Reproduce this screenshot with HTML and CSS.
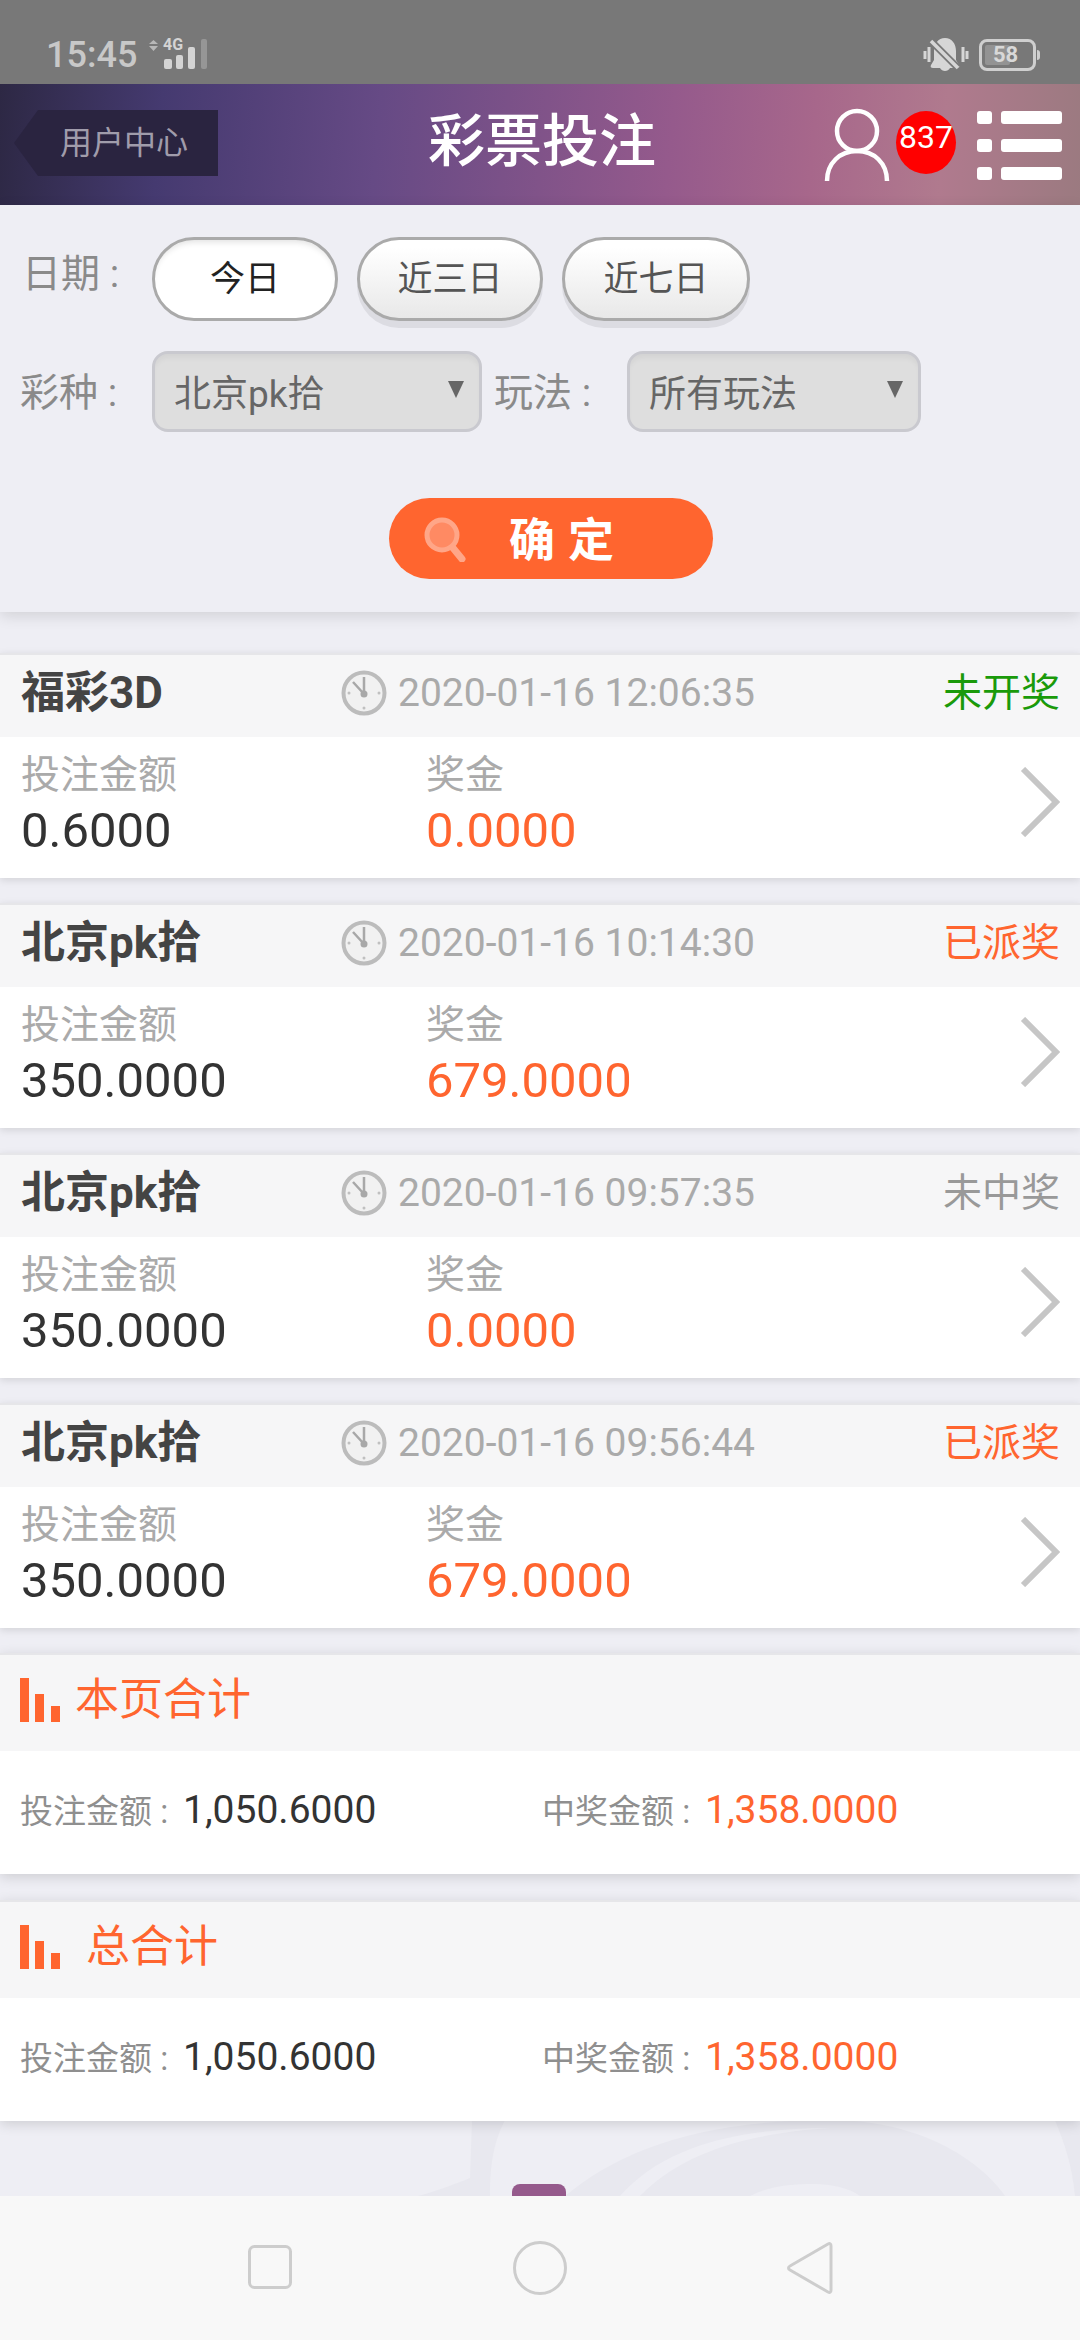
FILE: index.html
```html
<!DOCTYPE html>
<html lang="en">

<head>
    <meta charset="UTF-8">
    <meta name="viewport" content="width=device-width, initial-scale=1.0">
    <title>彩票投注</title>
    <link rel="stylesheet" href="styles.css">
</head>

<body>

<div class="statusbar">
    <div class="status-left">
        <span class="time">15:45</span>
        <span class="signal">
            <svg width="60" height="34" viewBox="0 0 60 34">
                <path d="M5.500 2l4.500 4H1zM5.500 13L1 8h9z" fill="#b8b8b8"/>
                <rect x="16" y="21" width="8" height="10" rx="2" fill="#d4d4d4"/>
                <rect x="28" y="17" width="7" height="14" rx="2" fill="#d4d4d4"/>
                <rect x="40" y="9" width="7" height="22" rx="2" fill="#d4d4d4"/>
                <rect x="53" y="1" width="6" height="30" rx="2" fill="#969696"/>
            </svg>
            <span class="net">4G</span>
        </span>
    </div>
    <div class="status-right">
        <svg width="47" height="34" viewBox="0 0 47 34">
            <path d="M23 0c7 0 11 6 11 13v9l3 5c1 2 0 3-2 3h-7c-1 2-3 3-5 3s-4-1-5-3h-7c-2 0-3-1-2-3l3-5v-9c0-7 4-13 11-13z" fill="#d6d6d6"/>
            <path d="M9 3l27 27" stroke="#787878" stroke-width="7"/>
            <path d="M9 3l27 27" stroke="#d6d6d6" stroke-width="3.500"/>
            <path d="M3 13v8M7 9v15M41 9v15M45 13v8" stroke="#d6d6d6" stroke-width="3"/>
        </svg>
        <div class="battery"><i class="battery-level"></i><span class="battery-text">58</span></div>
    </div>
</div>

<header>
    <a class="back">用户中心</a>
    <h1>彩票投注</h1>
    <div class="user">
        <svg width="66" height="74" viewBox="0 0 66 74">
            <circle cx="33" cy="23" r="20" fill="none" stroke="#fff" stroke-width="4.500"/>
            <path d="M3 73c0-18 13-30 30-30s30 12 30 30" fill="none" stroke="#fff" stroke-width="4.500"/>
        </svg>
        <span class="badge">837</span>
    </div>
    <div class="menu">
        <div class="menu-row"><i></i><b></b></div>
        <div class="menu-row"><i></i><b></b></div>
        <div class="menu-row"><i></i><b></b></div>
    </div>
</header>

<section class="filter">
    <div class="filter-row">
        <label class="date-label">日期 :</label>
        <button class="pill active">今日</button>
        <button class="pill">近三日</button>
        <button class="pill pill-last">近七日</button>
    </div>
    <div class="filter-row select-row">
        <label class="kind-label">彩种 :</label>
        <div class="select select-kind"><span>北京pk拾</span><i class="arrow"></i></div>
        <label class="play-label">玩法 :</label>
        <div class="select select-play"><span>所有玩法</span><i class="arrow"></i></div>
    </div>
    <button class="confirm">
        <svg width="46" height="46" viewBox="0 0 46 46">
            <circle cx="20" cy="19" r="15" fill="#ff8a63" stroke="#ffa688" stroke-width="5"/>
            <path d="M31 32l9 11" stroke="#ffa688" stroke-width="7" stroke-linecap="round"/>
        </svg>
        <span>确定</span>
    </button>
</section>

<main>
    <svg class="watermark" width="1080" height="76" viewBox="0 0 1080 76">
        <path d="M472 0h33c-10 20-15 40-15 76h-72c22-6 42-14 52-18z" fill="#e8e8ef"/>
        <path d="M565 76c55-46 135-76 265-76 90 0 150 40 175 76z" fill="#e8e8ef"/>
        <path d="M620 76c45-51 120-68 210-68-90 6-150 27-190 68z" fill="#eeeef4"/>
        <path d="M750 76c20-10 40-12 65-12 15 0 35 4 45 12z" fill="#eeeef4"/>
        <path d="M1055 0h25v76h-5c-3-31-10-51-20-76z" fill="#e8e8ef"/>
    </svg>

    <div class="card">
        <div class="card-head">
            <span class="game">福彩3D</span>
            <span class="when">
                <svg class="clock" width="46" height="46" viewBox="0 0 46 46"><use href="#clock"/></svg>
                2020-01-16 12:06:35
            </span>
            <span class="state open">未开奖</span>
        </div>
        <div class="card-body">
            <div class="col"><span class="cap">投注金额</span><span class="num">0.6000</span></div>
            <div class="col"><span class="cap">奖金</span><span class="num orange">0.0000</span></div>
            <svg class="chevron" width="40" height="70" viewBox="0 0 40 70"><path d="M3 2l33 33L3 68" fill="none" stroke="#c6c6c6" stroke-width="6"/></svg>
        </div>
    </div>

    <div class="card">
        <div class="card-head">
            <span class="game">北京pk拾</span>
            <span class="when">
                <svg class="clock" width="46" height="46" viewBox="0 0 46 46"><use href="#clock"/></svg>
                2020-01-16 10:14:30
            </span>
            <span class="state paid">已派奖</span>
        </div>
        <div class="card-body">
            <div class="col"><span class="cap">投注金额</span><span class="num">350.0000</span></div>
            <div class="col"><span class="cap">奖金</span><span class="num orange">679.0000</span></div>
            <svg class="chevron" width="40" height="70" viewBox="0 0 40 70"><path d="M3 2l33 33L3 68" fill="none" stroke="#c6c6c6" stroke-width="6"/></svg>
        </div>
    </div>

    <div class="card">
        <div class="card-head">
            <span class="game">北京pk拾</span>
            <span class="when">
                <svg class="clock" width="46" height="46" viewBox="0 0 46 46"><use href="#clock"/></svg>
                2020-01-16 09:57:35
            </span>
            <span class="state lost">未中奖</span>
        </div>
        <div class="card-body">
            <div class="col"><span class="cap">投注金额</span><span class="num">350.0000</span></div>
            <div class="col"><span class="cap">奖金</span><span class="num orange">0.0000</span></div>
            <svg class="chevron" width="40" height="70" viewBox="0 0 40 70"><path d="M3 2l33 33L3 68" fill="none" stroke="#c6c6c6" stroke-width="6"/></svg>
        </div>
    </div>

    <div class="card">
        <div class="card-head">
            <span class="game">北京pk拾</span>
            <span class="when">
                <svg class="clock" width="46" height="46" viewBox="0 0 46 46"><use href="#clock"/></svg>
                2020-01-16 09:56:44
            </span>
            <span class="state paid">已派奖</span>
        </div>
        <div class="card-body">
            <div class="col"><span class="cap">投注金额</span><span class="num">350.0000</span></div>
            <div class="col"><span class="cap">奖金</span><span class="num orange">679.0000</span></div>
            <svg class="chevron" width="40" height="70" viewBox="0 0 40 70"><path d="M3 2l33 33L3 68" fill="none" stroke="#c6c6c6" stroke-width="6"/></svg>
        </div>
    </div>

    <div class="total">
        <div class="total-head">
            <svg class="bars" width="40" height="44" viewBox="0 0 40 44"><use href="#bars"/></svg>
            <span class="total-title">本页合计</span>
        </div>
        <div class="total-body">
            <div class="total-col"><span class="total-cap">投注金额 :</span><span class="total-num">1,050.6000</span></div>
            <div class="total-col"><span class="total-cap">中奖金额 :</span><span class="total-num orange">1,358.0000</span></div>
        </div>
    </div>

    <div class="total">
        <div class="total-head">
            <svg class="bars" width="40" height="44" viewBox="0 0 40 44"><use href="#bars"/></svg>
            <span class="total-title wide">总合计</span>
        </div>
        <div class="total-body">
            <div class="total-col"><span class="total-cap">投注金额 :</span><span class="total-num">1,050.6000</span></div>
            <div class="total-col"><span class="total-cap">中奖金额 :</span><span class="total-num orange">1,358.0000</span></div>
        </div>
    </div>

    <div class="tab-peek"></div>
</main>

<nav>
    <svg width="44" height="44" viewBox="0 0 44 44"><rect x="1.500" y="1.500" width="41" height="41" rx="5" fill="none" stroke="#cdcdcd" stroke-width="3"/></svg>
    <svg width="54" height="54" viewBox="0 0 54 54"><circle cx="27" cy="27" r="25.500" fill="none" stroke="#cdcdcd" stroke-width="3"/></svg>
    <svg width="46" height="52" viewBox="0 0 46 52"><path d="M41 2c2-1 3 0 3 2v44c0 2-1 3-3 2L3 28c-2-1-2-3 0-4z" fill="none" stroke="#cdcdcd" stroke-width="3"/></svg>
</nav>

<svg class="defs" width="0" height="0">
    <defs>
        <g id="clock">
            <circle cx="23" cy="23" r="20.500" fill="#f1f1f1" stroke="#bcbcbc" stroke-width="4"/>
            <path d="M23 24V7M23 24L12 12" stroke="#a8a8a8" stroke-width="2.500"/>
            <circle cx="23" cy="24" r="3.500" fill="#a8a8a8"/>
            <circle cx="8" cy="23" r="1.500" fill="#c0c0c0"/>
            <circle cx="38" cy="23" r="1.500" fill="#c0c0c0"/>
            <circle cx="23" cy="38" r="1.500" fill="#c0c0c0"/>
        </g>
        <g id="bars" fill="#ff652f">
            <rect x="0" y="0" width="9" height="44"/>
            <rect x="15" y="16" width="9" height="28"/>
            <rect x="31" y="28" width="9" height="16"/>
        </g>
    </defs>
</svg>

</body>
</html>
```

FILE: styles.css
```css
* {
    box-sizing: border-box;
}

html, body {
    margin: 0;
    padding: 0;
}

body {
    width: 1080px;
    height: 2340px;
    overflow: hidden;
    display: flex;
    flex-direction: column;
    font-family: Roboto, "Noto Sans CJK SC", sans-serif;
    background-color: #eeeef4;
    color: #333;
}

.orange {
    color: #ff652f;
}

.defs {
    position: absolute;
}

/* status bar */
.statusbar {
    height: 84px;
    flex: none;
    background-color: #787878;
    display: flex;
    justify-content: space-between;
    align-items: flex-start;
    padding: 38px 44px 0 46px;
}

.status-left {
    display: flex;
    align-items: flex-start;
}

.time {
    font-size: 36px;
    line-height: 34px;
    font-weight: 500;
    color: #c8c8c8;
    width: 102px;
}

.signal {
    position: relative;
    display: block;
    width: 60px;
    height: 34px;
}

.net {
    position: absolute;
    left: 15px;
    top: -1px;
    font-size: 16px;
    line-height: 16px;
    font-weight: 700;
    color: #d4d4d4;
}

.status-right {
    display: flex;
    align-items: center;
    gap: 10px;
}

.battery {
    position: relative;
    width: 57px;
    height: 32px;
    border: 3px solid #cfcfcf;
    border-radius: 8px;
}

/* nub on the right end of the battery */
.battery::after {
    content: "";
    position: absolute;
    right: -7px;
    top: 8px;
    width: 3px;
    height: 10px;
    background-color: #cfcfcf;
    border-radius: 0 3px 3px 0;
}

.battery-level {
    position: absolute;
    left: 3px;
    top: 3px;
    bottom: 3px;
    width: 25px;
    background-color: #939393;
    border-radius: 2px;
}

.battery-text {
    position: absolute;
    left: 11px;
    top: 0;
    color: #d8d8d8;
    font-size: 22px;
    line-height: 26px;
    font-weight: 700;
}

/* header */
header {
    position: relative;
    height: 121px;
    flex: none;
    display: flex;
    align-items: center;
    padding-left: 14px;
    background: linear-gradient(95deg, #2d2844 0%, #453a70 15%, #664a85 35%, #955a8c 62%, #a7678b 75%, #b07a8e 87%, #9b7a80 100%);
}

.back {
    width: 204px;
    height: 66px;
    margin-top: -3px;
    padding-left: 46px;
    background-color: #2a2440;
    clip-path: polygon(24px 0, 100% 0, 100% 100%, 24px 100%, 0 50%);
    color: #a09cab;
    font-size: 32px;
    line-height: 66px;
}

header h1 {
    position: absolute;
    left: 428px;
    top: 26px;
    margin: 0;
    color: #fff;
    font-size: 57px;
    line-height: 64px;
    font-weight: 500;
}

.user {
    position: absolute;
    left: 824px;
    top: 24px;
}

.user svg {
    display: block;
}

.badge {
    position: absolute;
    left: 72px;
    top: 3px;
    width: 60px;
    height: 63px;
    border-radius: 50%;
    background-color: #f00;
    color: #fff;
    font-size: 32px;
    line-height: 52px;
    text-align: center;
}

.menu {
    position: absolute;
    left: 977px;
    top: 27px;
    display: flex;
    flex-direction: column;
    gap: 15px;
}

.menu-row {
    display: flex;
    gap: 9px;
}

.menu-row i {
    width: 15px;
    height: 13px;
    background-color: #fff;
    border-radius: 3px;
}

.menu-row b {
    width: 61px;
    height: 13px;
    background-color: #fff;
    border-radius: 3px;
}

/* filter panel */
.filter {
    height: 407px;
    flex: none;
    padding-top: 32px;
    background-color: #eeeef4;
    box-shadow: 0 4px 14px rgba(0, 0, 0, 0.12);
    position: relative;
}

.filter-row {
    display: flex;
    align-items: flex-start;
    height: 83px;
    padding-left: 152px;
    position: relative;
}

.filter-row label {
    position: absolute;
    left: 22px;
    top: 13px;
    font-size: 39px;
    line-height: 48px;
    color: #8a8a8a;
}

.pill {
    width: 186px;
    height: 84px;
    margin-right: 19px;
    padding: 0 0 8px;
    border: 3px solid #aaa;
    border-radius: 42px;
    background: linear-gradient(#fff 10%, #e8e8e8 100%);
    box-shadow: 0 7px 0 #dcdce2;
    color: #555;
    font-family: inherit;
    font-size: 35px;
}

.pill-last {
    width: 188px;
}

.pill.active {
    background: #fff;
    box-shadow: inset 0 6px 6px -4px rgba(0, 0, 0, 0.12);
    color: #222;
}

.select-row {
    margin-top: 31px;
    height: 81px;
}

.select {
    position: relative;
    height: 81px;
    background-color: #dedede;
    border: 3px solid #c9c9cf;
    border-radius: 16px;
    box-shadow: inset 0 6px 6px -3px rgba(0, 0, 0, 0.06);
    color: #666;
    font-size: 37px;
    line-height: 81px;
    padding-left: 19px;
}

.select-kind {
    width: 330px;
    margin-right: 145px;
}

.select-play {
    width: 294px;
}

.filter-row .kind-label {
    left: 20px;
    top: 18px;
}

.filter-row .play-label {
    left: 494px;
    top: 18px;
}

.arrow {
    position: absolute;
    right: 15px;
    top: 27px;
    width: 0;
    height: 0;
    border-left: 8px solid transparent;
    border-right: 8px solid transparent;
    border-top: 17px solid #666;
}

.confirm {
    display: flex;
    align-items: center;
    width: 324px;
    height: 81px;
    margin: 66px 0 0 389px;
    padding: 0 0 0 33px;
    border: none;
    border-radius: 41px;
    background-color: #ff652f;
    color: #fff;
    font-family: inherit;
    font-size: 46px;
    font-weight: 700;
    letter-spacing: 13px;
}

.confirm span {
    margin-left: 41px;
    margin-bottom: 6px;
}

/* records */
main {
    position: relative;
    flex: 1;
    min-height: 0;
    padding-top: 41px;
}

.watermark {
    position: absolute;
    left: 0;
    bottom: 0;
}

.tab-peek {
    position: absolute;
    left: 512px;
    bottom: 0;
    width: 54px;
    height: 12px;
    background-color: #955a8c;
    border-radius: 8px 8px 0 0;
}

.card {
    position: relative;
    background-color: #fff;
    margin-bottom: 25px;
    box-shadow: 0 2px 8px rgba(0, 0, 0, 0.12);
}

.card-head {
    position: relative;
    height: 84px;
    display: flex;
    align-items: center;
    justify-content: space-between;
    padding: 0 20px 14px 21px;
    background-color: #f6f6f7;
    border-top: 2px solid #e6e6e9;
}

.game {
    font-size: 44px;
    font-weight: 700;
    color: #444;
}

.when {
    position: absolute;
    left: 341px;
    top: 15px;
    display: flex;
    align-items: center;
    gap: 11px;
    height: 46px;
    font-size: 39px;
    color: #aaa;
}

.clock {
    flex: none;
}

.state {
    font-size: 39px;
}

.state.open {
    color: #1a9a0a;
}

.state.paid {
    color: #ff652f;
}

.state.lost {
    color: #999;
}

.card-body {
    position: relative;
    height: 141px;
    display: flex;
    padding: 13px 0 0 21px;
}

.col {
    width: 405px;
    display: flex;
    flex-direction: column;
}

.cap {
    font-size: 39px;
    line-height: 50px;
    color: #aaa;
}

.num {
    font-size: 49px;
    line-height: 62px;
}

.chevron {
    position: absolute;
    right: 20px;
    top: 30px;
}

/* totals */
.total {
    position: relative;
    background-color: #fff;
    margin-bottom: 26px;
    box-shadow: 0 3px 12px rgba(0, 0, 0, 0.14);
}

.total-head {
    height: 98px;
    display: flex;
    align-items: center;
    padding: 0 0 7px 20px;
    background-color: #f6f6f7;
    border-top: 2px solid #e6e6e9;
}

.total-title {
    margin: 0 0 8px 15px;
    font-size: 44px;
    color: #ff652f;
}

.total-title.wide {
    margin-left: 26px;
}

.total-body {
    height: 123px;
    display: flex;
    align-items: center;
    padding: 0 0 7px 20px;
}

.total-col {
    width: 522px;
    display: flex;
    align-items: baseline;
}

.total-cap {
    width: 163px;
    font-size: 33px;
    white-space: nowrap;
    color: #8f8f8f;
}

.total-num {
    font-size: 39px;
}

/* nav bar */
nav {
    position: relative;
    height: 144px;
    flex: none;
    background-color: #f8f8f8;
}

nav svg {
    position: absolute;
}

nav svg:nth-child(1) {
    left: 248px;
    top: 49px;
}

nav svg:nth-child(2) {
    left: 513px;
    top: 45px;
}

nav svg:nth-child(3) {
    left: 787px;
    top: 46px;
}
```
